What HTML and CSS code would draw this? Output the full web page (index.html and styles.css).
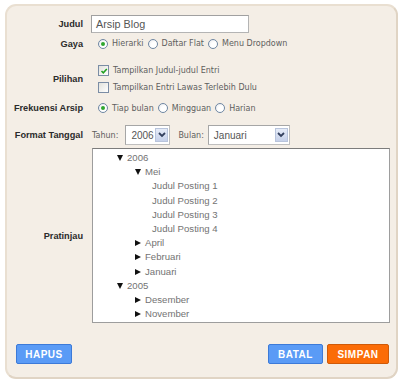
FILE: index.html
```html
<!DOCTYPE html>
<html>
<head>
<meta charset="utf-8">
<link rel="stylesheet" href="styles.css">
</head>
<body>
<div class="frame">
  <div class="row r1">
    <div class="label">Judul</div>
    <div class="ctl"><div class="textbox">Arsip Blog</div></div>
  </div>
  <div class="row r2">
    <div class="label">Gaya</div>
    <div class="ctl opts">
      <span class="opt"><span class="radio on"></span>Hierarki</span>
      <span class="opt"><span class="radio"></span>Daftar Flat</span>
      <span class="opt"><span class="radio"></span>Menu Dropdown</span>
    </div>
  </div>
  <div class="row r3">
    <div class="label">Pilihan</div>
    <div class="ctl checks">
      <span class="opt"><span class="check on"><svg viewBox="0 0 10 10" width="10" height="10"><path d="M2.5 5 L4.3 6.8 L7.8 3" fill="none" stroke="#21a121" stroke-width="1.6"/></svg></span>Tampilkan Judul-judul Entri</span>
      <span class="opt"><span class="check"></span>Tampilkan Entri Lawas Terlebih Dulu</span>
    </div>
  </div>
  <div class="row r4">
    <div class="label">Frekuensi Arsip</div>
    <div class="ctl opts">
      <span class="opt"><span class="radio on"></span>Tiap bulan</span>
      <span class="opt"><span class="radio"></span>Mingguan</span>
      <span class="opt"><span class="radio"></span>Harian</span>
    </div>
  </div>
  <div class="row r5">
    <div class="label">Format Tanggal</div>
    <div class="ctl dates">
      <span class="dlabel">Tahun:</span>
      <div class="select year"><span class="val">2006</span><span class="btn"><svg viewBox="0 0 8 6" width="8" height="6"><path d="M1 1 L4 4 L7 1" fill="none" stroke="#33405e" stroke-width="1.8"/></svg></span></div>
      <span class="dlabel b">Bulan:</span>
      <div class="select month"><span class="val">Januari</span><span class="btn"><svg viewBox="0 0 8 6" width="8" height="6"><path d="M1 1 L4 4 L7 1" fill="none" stroke="#33405e" stroke-width="1.8"/></svg></span></div>
    </div>
  </div>
  <div class="row r6">
    <div class="label">Pratinjau</div>
    <div class="ctl">
      <div class="preview">
        <div class="item l1"><span class="tri down"></span>2006</div>
        <div class="item l2"><span class="tri down"></span>Mei</div>
        <div class="item l3">Judul Posting 1</div>
        <div class="item l3">Judul Posting 2</div>
        <div class="item l3">Judul Posting 3</div>
        <div class="item l3">Judul Posting 4</div>
        <div class="item l2"><span class="tri right"></span>April</div>
        <div class="item l2"><span class="tri right"></span>Februari</div>
        <div class="item l2"><span class="tri right"></span>Januari</div>
        <div class="item l1"><span class="tri down"></span>2005</div>
        <div class="item l2"><span class="tri right"></span>Desember</div>
        <div class="item l2"><span class="tri right"></span>November</div>
      </div>
    </div>
  </div>
  <div class="buttons">
    <button class="btn-ui blue hapus">HAPUS</button>
    <div class="spacer"></div>
    <button class="btn-ui blue batal">BATAL</button>
    <button class="btn-ui orange simpan">SIMPAN</button>
  </div>
</div>
</body>
</html>
```
FILE: styles.css
```css
html, body {
  margin: 0;
  padding: 0;
  background: #ffffff;
}
body {
  width: 400px;
  height: 380px;
  overflow: hidden;
}
.frame {
  margin: 4px 0 0 5px;
  width: 393px;
  height: 375px;
  box-sizing: border-box;
  border: 2px solid #e9dfd1;
  border-right-color: #e0d4c4;
  border-bottom-color: #e0d4c4;
  border-radius: 11px;
  background: #f4eee6;
  padding-top: 8px;
  display: flex;
  flex-direction: column;
}
.row {
  display: flex;
  align-items: center;
}
.label {
  width: 76px;
  flex: none;
  text-align: right;
  white-space: nowrap;
  font-family: "Liberation Sans", Arial, sans-serif;
  font-weight: bold;
  font-size: 9.2px;
  color: #2b2b2b;
}
.ctl {
  margin-left: 8px;
  font-family: "DejaVu Sans", sans-serif;
  font-size: 8px;
  color: #5e5e5e;
  white-space: nowrap;
}
.r1 { height: 20px; }
.r2 { height: 19px; }
.r3 { height: 42px; margin-top: 5px; }
.r4 { height: 16px; }
.r5 { height: 20px; margin-top: 9px; }
.r6 { height: 175px; margin-top: 3px; }

.textbox {
  width: 158px;
  height: 18px;
  box-sizing: border-box;
  background: #fff;
  border: 1px solid #b4b4b4;
  border-top-color: #a0a0a0;
  border-left-color: #a0a0a0;
  padding-left: 4px;
  font-family: "Liberation Sans", Arial, sans-serif;
  font-size: 10.8px;
  line-height: 16px;
  color: #555;
}
.opts {
  display: flex;
  align-items: center;
  padding-left: 7px;
}
.opt {
  display: flex;
  align-items: center;
  margin-right: 4px;
}
.radio {
  width: 8px;
  height: 8px;
  border: 1px solid #6f87a3;
  border-radius: 50%;
  background: radial-gradient(circle at 65% 65%, #ffffff 40%, #e3e6ea 100%);
  margin-right: 4px;
  position: relative;
  flex: none;
}
.radio.on::after {
  content: "";
  position: absolute;
  left: 2px;
  top: 2px;
  width: 4px;
  height: 4px;
  border-radius: 50%;
  background: #2fa72f;
}
.checks {
  display: flex;
  flex-direction: column;
  padding-left: 7px;
}
.checks .opt {
  height: 17px;
}
.check {
  width: 9px;
  height: 9px;
  border: 1px solid #7b8da5;
  background: linear-gradient(135deg, #e2e2dc, #ffffff);
  margin-right: 4px;
  flex: none;
  display: flex;
}
.check svg { margin: -0.5px; }
.dates {
  display: flex;
  align-items: center;
}
.dlabel {
  margin-left: 1px;
  margin-right: 7px;
}
.dlabel.b { margin-left: 8px; margin-right: 4px; }
.select {
  height: 20px;
  box-sizing: border-box;
  background: #fff;
  border: 1px solid #a6a6a6;
  border-bottom-color: #bfbfbf;
  border-right-color: #bfbfbf;
  display: flex;
  align-items: center;
  justify-content: space-between;
  padding: 0 1px 0 5px;
  font-family: "Liberation Sans", Arial, sans-serif;
  font-size: 10px;
  color: #555;
}
.select.year { width: 45px; }
.select.month { width: 82px; }
.select .btn {
  width: 13px;
  height: 14px;
  box-sizing: border-box;
  border: 1px solid #b8c4dc;
  background: linear-gradient(#e6ecf8, #c6d1ea);
  display: flex;
  align-items: center;
  justify-content: center;
}
.preview {
  width: 298px;
  height: 175px;
  box-sizing: border-box;
  background: #fff;
  border: 1px solid #9d9d9d;
  border-top-color: #7c7c7c;
  padding-top: 2px;
  margin-left: 1px;
  font-family: "Liberation Sans", Arial, sans-serif;
  font-size: 9.6px;
  color: #737373;
}
.item {
  height: 14.2px;
  line-height: 14.2px;
  display: flex;
  align-items: center;
}
.l1 { padding-left: 24px; }
.l2 { padding-left: 42px; }
.l3 { padding-left: 59px; }
.tri {
  display: inline-block;
  width: 0;
  height: 0;
  flex: none;
}
.tri.down {
  border-left: 3px solid transparent;
  border-right: 3px solid transparent;
  border-top: 6px solid #111;
  margin-right: 4px;
}
.tri.right {
  border-top: 3px solid transparent;
  border-bottom: 3px solid transparent;
  border-left: 6px solid #111;
  margin-right: 4px;
}
.buttons {
  display: flex;
  align-items: center;
  margin-top: 21px;
  padding: 0 7px 0 9px;
}
.spacer { flex: 1; }
.btn-ui {
  height: 20px;
  box-sizing: border-box;
  border: 1px solid;
  border-radius: 2px;
  font-family: "Liberation Sans", Arial, sans-serif;
  font-weight: bold;
  font-size: 10px;
  letter-spacing: 0.5px;
  color: #fff;
  padding: 0;
  margin: 0;
}
.blue {
  background: #5a9bf6;
  border-color: #3c7ad8;
}
.orange {
  background: #fb6c07;
  border-color: #cf5a08;
}
.hapus { width: 56px; }
.batal { width: 55px; margin-right: 4px; }
.simpan { width: 62px; }
```
